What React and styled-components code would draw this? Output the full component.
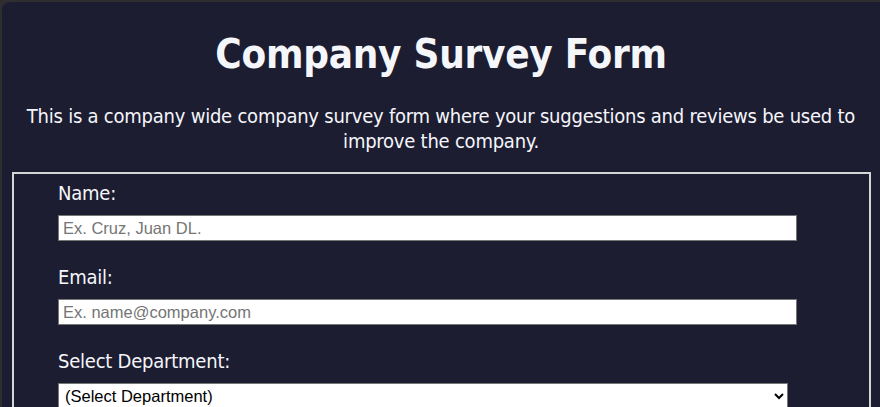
import React from 'react';
import styled, { createGlobalStyle } from 'styled-components';

const GlobalStyle = createGlobalStyle`
  html, body {
    margin: 0;
    padding: 0;
    background: #2e2e30;
    overflow: hidden;
  }
`;

const Page = styled.div`
  margin: 2px 0 0 2px;
  height: 420px;
  background: #1d1d32;
  border-radius: 8px 0 0 8px;
  color: #f5f6fa;
  font-family: 'DejaVu Sans Condensed', 'DejaVu Sans', sans-serif;
  letter-spacing: -0.23px;
  box-sizing: border-box;
  padding-top: 28px;
`;

const Header = styled.header`
  text-align: center;
  padding: 0 10px;
`;

const Title = styled.h1`
  font-size: 40px;
  line-height: 48px;
  font-weight: bold;
  letter-spacing: -0.26px;
  margin: 0;
`;

const Description = styled.p`
  font-size: 20px;
  line-height: 25px;
  margin: 26px 0 0;
`;

const Form = styled.form`
  margin: 18px 9px 0 10px;
  border: 2px solid #d6d6d6;
  border-bottom: none;
  padding: 7px 0 0 44px;
`;

const Field = styled.div`
  display: flex;
  flex-direction: column;
  align-items: flex-start;
  margin-bottom: 24px;
`;

const Label = styled.label`
  font-size: 20px;
  line-height: 24px;
  margin-bottom: 10px;
`;

const Input = styled.input`
  width: 739px;
  height: 26px;
  box-sizing: border-box;
  border: 1px solid #767676;
  border-radius: 0;
  padding: 3px 4px;
  font-family: 'Liberation Sans', Arial, sans-serif;
  font-size: 16.5px;
  letter-spacing: 0;
  color: #222;
  background: #fff;
  outline: none;

  &::placeholder {
    color: #757575;
  }
`;

const Select = styled.select`
  width: 730px;
  height: 26px;
  box-sizing: border-box;
  border: 1px solid #767676;
  border-radius: 0;
  padding: 0 2px;
  font-family: 'Liberation Sans', Arial, sans-serif;
  font-size: 16.5px;
  letter-spacing: 0;
  color: #000;
  background: #fff;
`;

const App = () => (
  <>
    <GlobalStyle />
    <Page>
      <Header>
        <Title>Company Survey Form</Title>
        <Description>
          This is a company wide company survey form where your suggestions and reviews be used to
          improve the company.
        </Description>
      </Header>
      <Form>
        <Field>
          <Label htmlFor="name">Name:</Label>
          <Input id="name" type="text" placeholder="Ex. Cruz, Juan DL." />
        </Field>
        <Field>
          <Label htmlFor="email">Email:</Label>
          <Input id="email" type="email" placeholder="Ex. name@company.com" />
        </Field>
        <Field>
          <Label htmlFor="dept">Select Department:</Label>
          <Select id="dept" defaultValue="">
            <option value="">(Select Department)</option>
            <option value="hr">Human Resources</option>
            <option value="it">IT</option>
          </Select>
        </Field>
      </Form>
    </Page>
  </>
);

export default App;
